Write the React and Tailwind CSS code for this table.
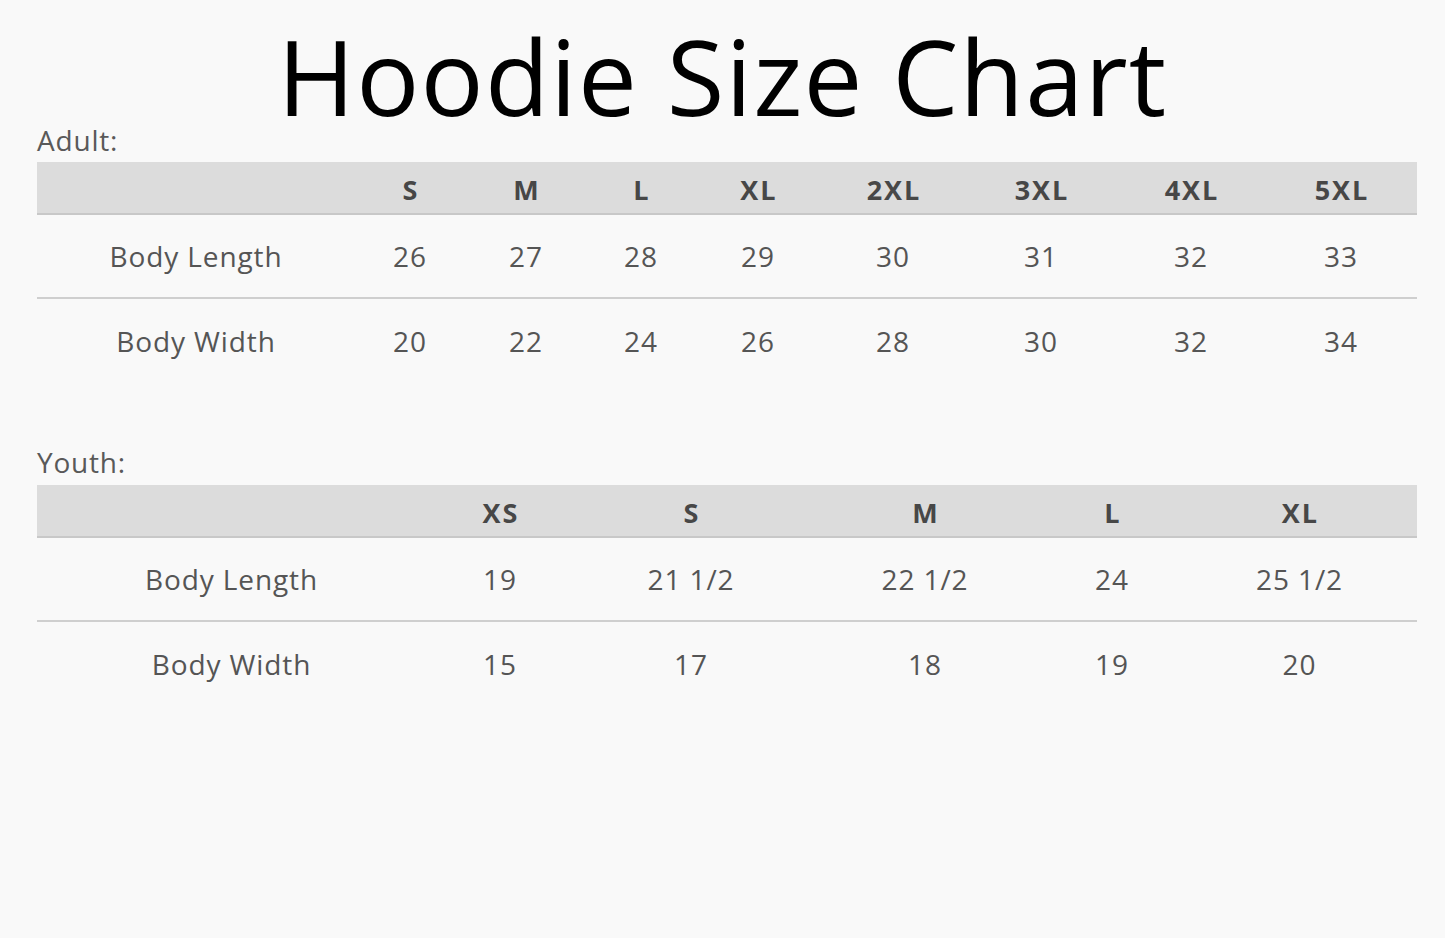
import React from "react";

const adultCols = [318, 110, 122, 108, 126, 144, 152, 148, 152];
const youthCols = [389, 148, 234, 234, 140, 235];

function Table({ cols, heads, rows }) {
  const tpl = cols.map((c) => c + "px").join(" ");
  return (
    <div className="w-[1380px] ml-[37px]">
      <div
        className="grid h-[53px] bg-[#dcdcdc] border-b-2 border-[#c8c8c8] text-[27px] font-bold text-[#474747] pt-[3px]"
        style={{ gridTemplateColumns: tpl }}
      >
        <div />
        {heads.map((h) => (
          <div key={h} className="flex items-center justify-center leading-none tracking-[2px] pl-[2px]">
            {h}
          </div>
        ))}
      </div>
      {rows.map((r, i) => (
        <div
          key={r[0]}
          className={
            "grid text-[28px] text-[#555555] " +
            (i === 0 ? "h-[84px] border-b-2 border-[#cfcfcf]" : "h-[84px]")
          }
          style={{ gridTemplateColumns: tpl }}
        >
          {r.map((c, j) => (
            <div
              key={j}
              className="flex items-center justify-center leading-none whitespace-nowrap tracking-[0.9px]"
            >
              {c}
            </div>
          ))}
        </div>
      ))}
    </div>
  );
}

export default function App() {
  return (
    <div
      className="w-[1445px] h-[938px] bg-[#f9f9f9] overflow-hidden"
      style={{ fontFamily: '"Open Sans", "Noto Sans", sans-serif' }}
    >
      <div className="pt-[26px] h-[126px] text-center text-[105px] leading-[100px] text-black tracking-[1.2px]">
        Hoodie Size Chart
      </div>
      <div className="ml-[37px] text-[28px] leading-[28px] text-[#595959] tracking-[0.8px]">Adult:</div>
      <div className="mt-[8px]">
        <Table
          cols={adultCols}
          heads={["S", "M", "L", "XL", "2XL", "3XL", "4XL", "5XL"]}
          rows={[
            ["Body Length", "26", "27", "28", "29", "30", "31", "32", "33"],
            ["Body Width", "20", "22", "24", "26", "28", "30", "32", "34"],
          ]}
        />
      </div>
      <div className="mt-[65px] ml-[37px] text-[28px] leading-[28px] text-[#595959] tracking-[0.8px]">Youth:</div>
      <div className="mt-[9px]">
        <Table
          cols={youthCols}
          heads={["XS", "S", "M", "L", "XL"]}
          rows={[
            ["Body Length", "19", "21 1/2", "22 1/2", "24", "25 1/2"],
            ["Body Width", "15", "17", "18", "19", "20"],
          ]}
        />
      </div>
    </div>
  );
}
